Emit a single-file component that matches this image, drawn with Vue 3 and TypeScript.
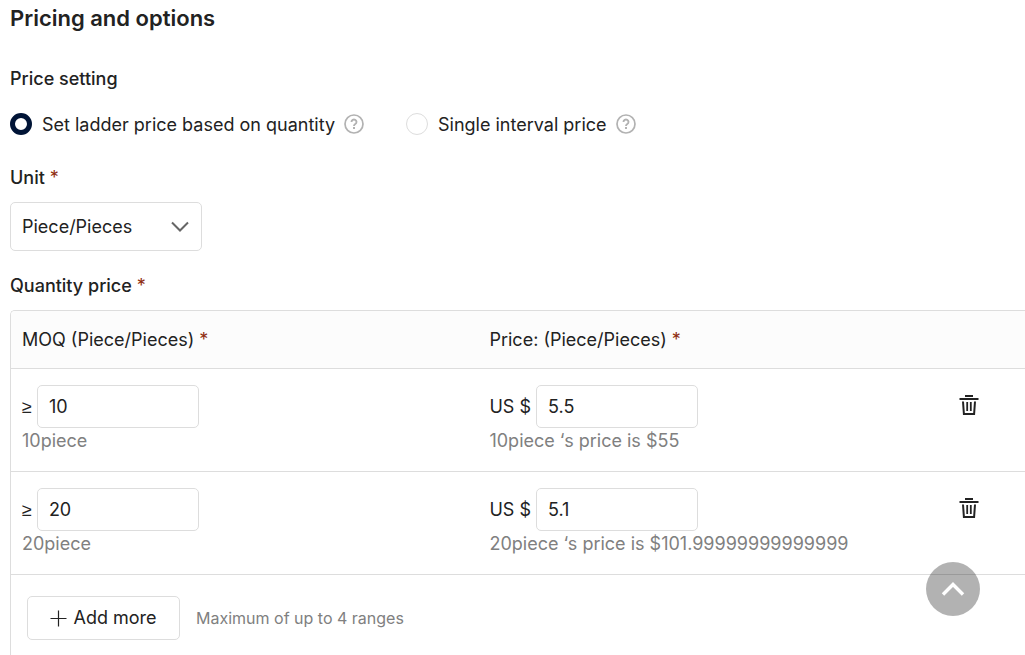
<script setup lang="ts">
import { ref } from 'vue'

interface PriceRange {
  id: number
  quantity: string
  price: string
}

const MAX_RANGES = 4
const mode = ref<'ladder' | 'single'>('ladder')
const unit = ref('Piece')
const ranges = ref<PriceRange[]>([
  { id: 1, quantity: '10', price: '5.5' },
  { id: 2, quantity: '20', price: '5.1' },
])

function total(range: PriceRange): number {
  const cents = Number(range.price) * 100
  return (cents * Number(range.quantity)) / 100
}

function addRange(): void {
  if (ranges.value.length < MAX_RANGES) {
    ranges.value.push({ id: Date.now(), quantity: '', price: '' })
  }
}

function removeRange(id: number): void {
  ranges.value = ranges.value.filter((range) => range.id !== id)
}

function scrollToTop(): void {
  window.scrollTo({ top: 0, behavior: 'smooth' })
}
</script>

<template>
  <main class="page">
    <h1 class="title">Pricing and options</h1>

    <h2 id="setting-label" class="label setting-label">Price setting</h2>
    <div class="modes" role="radiogroup" aria-labelledby="setting-label">
      <div class="mode">
        <input id="mode-ladder" v-model="mode" class="radio" type="radio" name="mode" value="ladder" />
        <label for="mode-ladder">Set ladder price based on quantity</label>
        <button class="help" type="button" aria-label="Help">
          <svg width="20" height="20" viewBox="0 0 20 20" fill="none" stroke="currentColor">
            <circle cx="10" cy="10" r="9" stroke-width="1.7" />
            <path d="M7.5 8a2.5 2.4 0 1 1 3.8 2c-.9.6-1.3.9-1.3 1.9" stroke-width="1.9" />
            <path d="M10 13v2" stroke-width="2" />
          </svg>
        </button>
      </div>
      <div class="mode">
        <input id="mode-single" v-model="mode" class="radio" type="radio" name="mode" value="single" />
        <label for="mode-single">Single interval price</label>
        <button class="help" type="button" aria-label="Help">
          <svg width="20" height="20" viewBox="0 0 20 20" fill="none" stroke="currentColor">
            <circle cx="10" cy="10" r="9" stroke-width="1.7" />
            <path d="M7.5 8a2.5 2.4 0 1 1 3.8 2c-.9.6-1.3.9-1.3 1.9" stroke-width="1.9" />
            <path d="M10 13v2" stroke-width="2" />
          </svg>
        </button>
      </div>
    </div>

    <label class="label" for="unit">Unit <span class="required">*</span></label>
    <div class="select-box">
      <select id="unit" v-model="unit">
        <option value="Piece">Piece/Pieces</option>
      </select>
      <svg class="chevron" width="18" height="12" viewBox="0 0 18 12" fill="none" stroke="#666" stroke-width="2">
        <path d="M1 1.5l8 8 8-8" />
      </svg>
    </div>

    <h2 id="quantity-label" class="label">Quantity price <span class="required">*</span></h2>
    <div class="panel">
      <table aria-labelledby="quantity-label">
        <colgroup>
          <col class="col-main" />
          <col class="col-main" />
          <col />
        </colgroup>
        <thead>
          <tr>
            <th scope="col">MOQ (Piece/Pieces) <span class="required">*</span></th>
            <th scope="col">Price: (Piece/Pieces) <span class="required">*</span></th>
            <td></td>
          </tr>
        </thead>
        <tbody>
          <tr v-for="range in ranges" :key="range.id">
            <td>
              <div class="field">
                <label class="sign" :for="`quantity-${range.id}`">≥</label>
                <input :id="`quantity-${range.id}`" v-model="range.quantity" type="text" />
              </div>
              <p class="hint">{{ range.quantity }}piece</p>
            </td>
            <td>
              <div class="field">
                <label :for="`price-${range.id}`">US $</label>
                <input :id="`price-${range.id}`" v-model="range.price" type="text" />
              </div>
              <p class="hint">{{ range.quantity }}piece ‘s price is ${{ total(range) }}</p>
            </td>
            <td class="actions">
              <button class="remove" type="button" aria-label="Delete" @click="removeRange(range.id)">
                <svg width="20" height="22" viewBox="0 0 20 22" fill="none" stroke="currentColor">
                  <path d="M6 2h8" stroke-width="2" />
                  <path d="M.5 5h19" stroke-width="2" />
                  <path d="M4 7.5l.9 12.5h10.2l.9-12.5" stroke-width="2" />
                  <path d="M8.2 8v9M11.8 8v9" stroke-width="1.8" />
                </svg>
              </button>
            </td>
          </tr>
        </tbody>
      </table>
      <div class="panel-footer">
        <button class="add" type="button" @click="addRange">
          <svg width="17" height="17" viewBox="0 0 17 17" fill="none" stroke="currentColor" stroke-width="1.2">
            <path d="M.5 8.5h16M8.5 .5v16" />
          </svg>
          Add more
        </button>
        <span class="note">Maximum of up to {{ MAX_RANGES }} ranges</span>
      </div>
    </div>

    <button class="to-top" type="button" aria-label="Back to top" @click="scrollToTop">
      <svg width="24" height="16" viewBox="0 0 24 16" fill="none" stroke="#fff" stroke-width="3.4">
        <path d="M2 13.5L12 3.5l10 10" />
      </svg>
    </button>
  </main>
</template>

<style>
body {
  margin: 0;
  background: #fff;
}
</style>

<style scoped>
.page {
  box-sizing: border-box;
  display: flex;
  flex-direction: column;
  min-height: 100vh;
  padding: 4px 0 0 10px;
  color: #222;
  font-family: Inter, "Liberation Sans", sans-serif;
  font-size: 18px;
  line-height: 28px;
}

button,
input,
select {
  box-sizing: border-box;
  margin: 0;
  color: inherit;
  font: inherit;
}

button {
  padding: 0;
  border: 0;
  background: none;
  cursor: pointer;
}

svg {
  display: block;
}

.title {
  margin: 0;
  font-size: 22px;
  font-weight: 600;
  line-height: 28px;
}

.label {
  display: block;
  margin: 0;
  font-size: 18px;
  font-weight: 500;
}

.setting-label {
  margin-top: 33px;
}

.required {
  color: #8f2d10;
  font-weight: 400;
}

.modes {
  display: flex;
  gap: 42px;
  margin: 18px 0 25px;
}

.mode {
  display: flex;
  align-items: center;
}

.radio {
  width: 22px;
  height: 22px;
  margin: 0 10px 2px 0;
  appearance: none;
  border: 1px solid #ddd;
  border-radius: 50%;
  background: #fff;
}

.radio:checked {
  border: 5px solid #001436;
}

.help {
  margin: 0 0 2px 9px;
  color: #b2b2b2;
}

.select-box {
  display: grid;
  align-items: center;
  width: 192px;
  margin: 10px 0 21px;
}

.select-box select {
  grid-area: 1 / 1;
  height: 49px;
  padding: 0 40px 0 11px;
  appearance: none;
  border: 1px solid #ddd;
  border-radius: 5px;
  background: #fff;
}

.chevron {
  grid-area: 1 / 1;
  justify-self: end;
  margin-right: 13px;
  pointer-events: none;
}

.panel {
  flex: 1;
  margin-top: 10px;
  overflow: hidden;
  border: 1px solid #ddd;
  border-width: 1px 0 0 1px;
  border-radius: 5px 0 0 0;
}

table {
  width: 100%;
  border-spacing: 0;
  table-layout: fixed;
}

.col-main {
  width: 46%;
}

th,
td {
  padding: 0 0 0 12px;
  border-bottom: 1px solid #ddd;
  font-weight: 400;
  text-align: left;
  vertical-align: top;
}

th:first-child,
td:first-child {
  padding-left: 11px;
}

thead th,
thead td {
  height: 57px;
  background: #fcfcfc;
  vertical-align: middle;
}

tbody td {
  padding-top: 16px;
  padding-bottom: 17px;
}

.field {
  display: flex;
  align-items: center;
  gap: 5px;
}

.sign {
  font-family: "Liberation Sans", sans-serif;
}

.field input {
  width: 162px;
  height: 43px;
  padding: 0 11px;
  border: 1px solid #ddd;
  border-radius: 5px;
  background: #fff;
}

.hint {
  height: 26px;
  margin: 0;
  color: #808080;
  line-height: 26px;
  white-space: nowrap;
}

td.actions {
  padding-right: 46px;
  text-align: right;
}

.remove {
  padding: 9px 0;
}

.panel-footer {
  display: flex;
  align-items: center;
  gap: 16px;
  padding: 21px 16px 15px;
}

.add {
  display: flex;
  align-items: center;
  justify-content: center;
  gap: 6px;
  width: 153px;
  height: 44px;
  border: 1px solid #ddd;
  border-radius: 5px;
  background: #fff;
}

.note {
  color: #808080;
  font-size: 16px;
}

.to-top {
  position: fixed;
  right: 45px;
  bottom: 39px;
  display: flex;
  align-items: center;
  justify-content: center;
  width: 54px;
  height: 54px;
  border-radius: 50%;
  background: rgba(0, 0, 0, 0.3);
}
</style>
